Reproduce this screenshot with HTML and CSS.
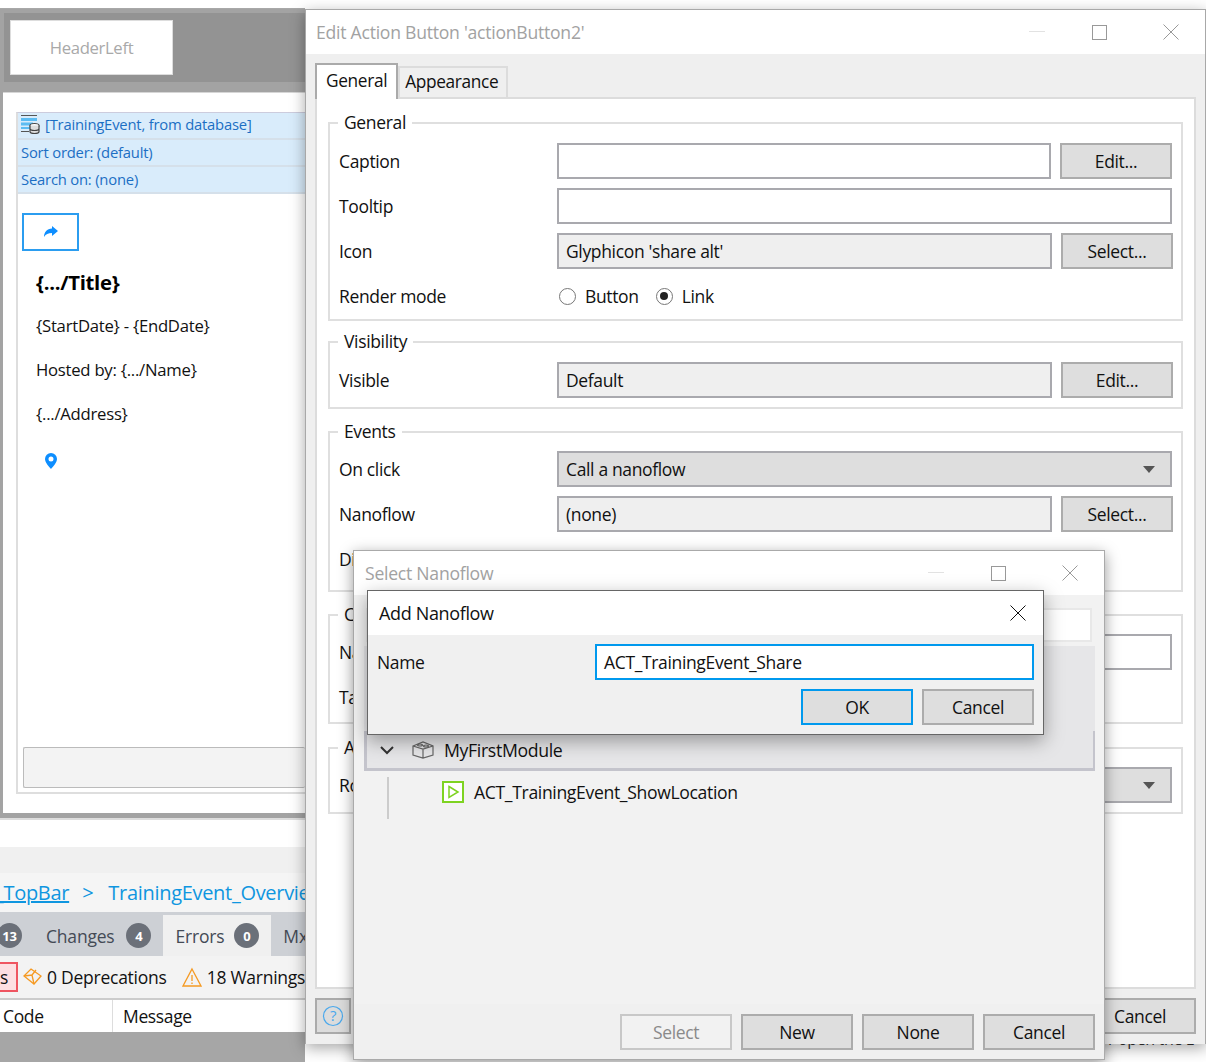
FILE: index.html
```html
<!DOCTYPE html>
<html lang="en">
<head>
<meta charset="utf-8">
<title>Edit Action Button</title>
<link rel="stylesheet" href="styles.css">
</head>
<body>
<div class="desk">
  <div class="app">
    <div class="topstrip"></div>
    <div class="canvas">
      <div class="headerband"><div class="headerleft">HeaderLeft</div></div>
      <div class="page">
        <div class="listview">
          <div class="bluerow first">
            <svg class="dbicon" width="22" height="20" viewBox="0 0 22 20"><path d="M2 1.500h16M2 17.500h8" stroke="#555" stroke-width="1.200" fill="none"/><path d="M2 4h16v3H2zM2 8.500h12v3H2zM2 13h9v2H2z" fill="#5cbcf2"/><ellipse cx="15.500" cy="11.500" rx="4.500" ry="2" fill="#fff" stroke="#444" stroke-width="1.200"/><path d="M11 11.500v6c0 1 2 2 4.500 2s4.500-1 4.500-2v-6M11 14.500c0 1 2 2 4.500 2s4.500-1 4.500-2" fill="#ddd" stroke="#444" stroke-width="1.200"/></svg>
            <span>[TrainingEvent, from database]</span>
          </div>
          <div class="bluerow">Sort order: (default)</div>
          <div class="bluerow">Search on: (none)</div>
          <div class="sharebtn">
            <svg width="16" height="14" viewBox="0 0 16 14"><path d="M9 1l6 5-6 5V8C5 8 3 9 1 12c0-5 3-8 8-8.500z" fill="#0d8eff"/></svg>
          </div>
          <div class="ttl">{.../Title}</div>
          <div class="line">{StartDate} - {EndDate}</div>
          <div class="line">Hosted by: {.../Name}</div>
          <div class="line">{.../Address}</div>
          <svg class="pin" width="12" height="16" viewBox="0 0 12 16"><path fill-rule="evenodd" d="M6 0a6 6 0 0 1 6 6c0 3.500-4 7.500-6 10C4 13.500 0 9.500 0 6a6 6 0 0 1 6-6zm0 3.500a2.500 2.500 0 1 0 0 5 2.500 2.500 0 0 0 0-5z" fill="#0d8eff"/></svg>
          <div class="spacer"></div>
          <div class="loadmore"></div>
        </div>
      </div>
    </div>
    <div class="gapwhite"></div>
    <div class="crumbpad"></div>
    <div class="crumbs"><a class="crumblink">_TopBar</a><span class="sep">&gt;</span><span class="crumbcur">TrainingEvent_Overview</span></div>
    <div class="tabstrip">
      <span class="tb tbfirst"><b class="badge">13</b></span>
      <span class="tb">Changes <b class="badge">4</b></span>
      <span class="tb tbactive">Errors <b class="badge">0</b></span>
      <span class="tb">Mx</span>
    </div>
    <div class="filters">
      <span class="redchip">s</span>
      <svg class="ficon" width="22" height="20" viewBox="0 0 22 20"><g fill="none" stroke="#f59a23" stroke-width="1.300"><path d="M9 2l10 7-7 8L2 9z"/><path d="M2 9l8-1 2 9M10 8l4-5"/></g></svg>
      <span class="ftxt">0 Deprecations</span>
      <svg class="ficon warn" width="20" height="20" viewBox="0 0 20 20"><path d="M10 2l9 17H1z" fill="none" stroke="#f59a23" stroke-width="1.300"/><path d="M10 8v6M10 15.500v1.500" stroke="#f59a23" stroke-width="1.300"/></svg>
      <span class="ftxt">18 Warnings</span>
    </div>
    <div class="tablehead"><span class="c1">Code</span><span class="c2">Message</span></div>
    <div class="appfoot"></div>
  </div>
  <div class="peek">r open the L</div>

  <section class="win editwin">
    <div class="wintitle">
      <span class="wtext">Edit Action Button 'actionButton2'</span>
      <span class="wmin"></span><span class="wmax"></span>
      <svg class="wclose" width="16" height="16" viewBox="0 0 16 16"><path d="M.5.500l15 15M15.500.500l-15 15" stroke="#999" fill="none"/></svg>
    </div>
    <div class="editbody">
      <div class="tabs"><span class="tab tabon">General</span><span class="tab">Appearance</span></div>
      <div class="tabpane">
        <fieldset class="grp g1">
          <legend>General</legend>
          <div class="row"><label>Caption</label><div class="inp"></div><div class="btn">Edit...</div></div>
          <div class="row"><label>Tooltip</label><div class="inp wide"></div></div>
          <div class="row r2"><label>Icon</label><div class="inp ro">Glyphicon 'share alt'</div><div class="btn">Select...</div></div>
          <div class="row"><label>Render mode</label>
            <div class="radios"><span class="radio"></span><span class="rtxt">Button</span><span class="radio on"></span><span class="rtxt">Link</span></div>
          </div>
        </fieldset>
        <fieldset class="grp g2">
          <legend>Visibility</legend>
          <div class="row r2"><label>Visible</label><div class="inp ro">Default</div><div class="btn">Edit...</div></div>
        </fieldset>
        <fieldset class="grp g3">
          <legend>Events</legend>
          <div class="row"><label>On click</label><div class="inp sel wide">Call a nanoflow<i class="caret"></i></div></div>
          <div class="row r2"><label>Nanoflow</label><div class="inp ro">(none)</div><div class="btn">Select...</div></div>
          <div class="row"><label>Disabled during action</label></div>
        </fieldset>
        <fieldset class="grp g4">
          <legend>Common</legend>
          <div class="row"><label>Name</label><div class="inp wide"></div></div>
          <div class="row"><label>Tab index</label></div>
        </fieldset>
        <fieldset class="grp g5">
          <legend>Accessibility</legend>
          <div class="row"><label>Role type</label><div class="inp sel wide"><i class="caret"></i></div></div>
        </fieldset>
      </div>
      <div class="editfoot">
        <div class="helpbtn"><svg width="22" height="22" viewBox="0 0 22 22"><circle cx="11" cy="11" r="9.500" fill="none" stroke="#4aa8ec" stroke-width="1.200"/><text x="11" y="16" text-anchor="middle" class="helpq">?</text></svg></div>
        <div class="btn footbtn">Cancel</div>
      </div>
    </div>
  </section>

  <section class="win selwin">
    <div class="wintitle seltitle">
      <span class="wtext">Select Nanoflow</span>
      <span class="wmin"></span><span class="wmax"></span>
      <svg class="wclose" width="16" height="16" viewBox="0 0 16 16"><path d="M.5.500l15 15M15.500.500l-15 15" stroke="#999" fill="none"/></svg>
    </div>
    <div class="selbody">
      <div class="searchbox"></div>
      <div class="tree">
        <div class="treeband"></div>
        <div class="treesel"></div>
        <div class="treerow modrow">
          <svg class="chev" width="14" height="9" viewBox="0 0 14 9"><path d="M1 1l6 6 6-6" fill="none" stroke="#333" stroke-width="2"/></svg>
          <svg class="lego" width="22" height="18" viewBox="0 0 22 18"><g fill="none" stroke="#666" stroke-width="1.200"><path d="M1 5l10-4 10 4v9l-10 3-10-3zM1 5l10 3 10-3M11 8v9"/><ellipse cx="8" cy="4" rx="2.500" ry="1"/><ellipse cx="14" cy="5" rx="2.500" ry="1"/></g></svg>
          <span>MyFirstModule</span>
        </div>
        <div class="treerow leaf">
          <svg width="22" height="22" viewBox="0 0 22 22"><rect x="1" y="1" width="20" height="20" fill="#fff" stroke="#7ed321" stroke-width="2"/><path d="M7 5.500l9 5.500-9 5.500z" fill="none" stroke="#7ed321" stroke-width="1.500"/></svg>
          <span>ACT_TrainingEvent_ShowLocation</span>
        </div>
      </div>
      <div class="selfoot">
        <div class="btn off">Select</div><div class="btn">New</div><div class="btn">None</div><div class="btn">Cancel</div>
      </div>
    </div>
  </section>

  <section class="addwin">
    <div class="addtitle"><span>Add Nanoflow</span>
      <svg width="16" height="16" viewBox="0 0 16 16"><path d="M.5.500l15 15M15.500.500l-15 15" stroke="#111" fill="none"/></svg>
    </div>
    <div class="addbody">
      <div class="addrow"><label>Name</label><div class="inp focus">ACT_TrainingEvent_Share</div></div>
      <div class="addbtns"><div class="btn primary">OK</div><div class="btn">Cancel</div></div>
    </div>
  </section>
</div>
</body>
</html>
```

FILE: styles.css
```css
* { box-sizing: border-box; }
html, body { margin: 0; padding: 0; }
body {
  font-family: "Open Sans", "Noto Sans", sans-serif;
  font-size: 16px;
  letter-spacing: -0.35px;
  color: #111;
  background: #fff;
}
.desk { position: relative; width: 1206px; height: 1062px; overflow: hidden; background: #fff; }

/* background application */
.app { width: 305px; height: 1062px; display: flex; flex-direction: column; overflow: hidden; white-space: nowrap; }
.topstrip { height: 9px; background: #fff; flex: none; border-bottom: 1px solid #a8a8a8; }
.canvas { height: 809px; flex: none; background: #a3a3a3; padding: 4px 0 0 4px; }
.headerband { height: 69px; background: #939393; padding: 7px 0 0 6px; }
.headerleft { width: 163px; height: 55px; background: #fff; border: 1px solid #ddd; color: #a9a9a9; display: flex; align-items: center; justify-content: center; font-size: 16.700px; }
.page { margin: 10px 0 0 -1px; height: 721px; background: #fff; border-top: 1px solid #d6d6d6; padding: 19px 0 0 13px; }
.listview { height: 682px; border-left: 2px solid #dedede; border-top: 1px solid #ccd; border-bottom: 2px solid #dedede; display: flex; flex-direction: column; }
.bluerow { height: 27px; flex: none; background: #d9ecfb; border-bottom: 2px solid #d5e0ea; color: #1c6fc4; font-size: 14.800px; padding: 0 0 2px 3px; display: flex; align-items: center; gap: 4px; letter-spacing: -0.2px; }
.bluerow.first { padding-bottom: 3px; }
.dbicon { margin-left: -2px; }
.sharebtn { width: 57px; height: 38px; flex: none; margin: 19px 0 0 4px; border: 2px solid #2b9df0; display: flex; align-items: center; justify-content: center; }
.ttl { margin: 17px 0 0 18px; font-weight: 700; font-size: 20.300px; color: #000; height: 28px; letter-spacing: -0.3px; }
.line { margin: 17px 0 0 18px; height: 27px; font-size: 16.700px; color: #111; letter-spacing: -0.25px; }
.ttl + .line { margin-top: 18px; }
.pin { margin: 24px 0 0 27px; flex: none; }
.spacer { flex: 1; }
.loadmore { height: 41px; flex: none; margin: 0 0 4px 5px; background: #f3f3f3; border: 1px solid #bbb; border-right: 0; border-radius: 2px; }
.gapwhite { height: 29px; flex: none; background: #fff; border-top: 2px solid #ddd; }
.crumbpad { height: 26px; flex: none; background: #f0f0f0; }
.crumbs { height: 39px; flex: none; background: #f5f5f5; color: #0f96e0; font-size: 20px; display: flex; align-items: center; margin-left: -2px; width: 320px; letter-spacing: -0.3px; }
.crumblink { text-decoration: underline; margin-left: -3px; margin-right: 13px; }
.sep { margin-right: 15px; }
.tabstrip { height: 44px; flex: none; background: #cdd0d5; display: flex; align-items: flex-end; color: #444a55; font-size: 17.500px; }
.tb { height: 41px; display: flex; align-items: center; gap: 12px; padding: 0 12px; letter-spacing: -0.2px; flex: none; }
.tbfirst { margin-left: -3px; padding-left: 0; padding-right: 0; width: 39px; justify-content: flex-start; }
.tbfirst + .tb { padding-left: 10px; }
.tbactive { background: #f0f0f0; gap: 10px; }
.badge { width: 25px; height: 25px; border-radius: 50%; background: #6b7079; color: #fff; font-size: 13px; font-weight: 700; display: flex; align-items: center; justify-content: center; flex: none; }
.filters { height: 44px; flex: none; background: #f3f3f3; display: flex; align-items: center; font-size: 17.500px; border-bottom: 2px solid #ccc; }
.redchip { width: 18px; height: 30px; flex: none; background: #fddfe2; border: 2px solid #ef5561; border-left: 0; display: flex; align-items: center; padding-left: 0; margin-right: 4px; }
.ficon { flex: none; }
.ftxt { margin-left: 3px; letter-spacing: -0.25px; flex: none; }
.warn { margin-left: 15px; margin-right: 2px; }
.tablehead { height: 32px; flex: none; background: #fff; display: flex; font-size: 17.500px; align-items: center; }
.c1 { width: 113px; padding-left: 3px; border-right: 1px solid #ddd; height: 100%; display: flex; align-items: center; }
.c2 { padding-left: 10px; }
.appfoot { flex: 1; background: #a6a6a6; }
.peek { position: absolute; left: 1108px; top: 1028px; font-size: 16px; color: #333; }

/* windows */
.win { position: absolute; display: flex; flex-direction: column; white-space: nowrap; }
.editwin { left: 305px; top: 9px; width: 901px; height: 1035px; background: #efefef; border: 1px solid #a8a8a8; border-bottom: 0; box-shadow: 0 4px 14px rgba(0,0,0,.35); font-size: 18px; }
.selwin { left: 353px; top: 550px; width: 752px; height: 510px; background: #f2f2f2; border: 1px solid #aaa; box-shadow: 0 4px 14px rgba(0,0,0,.4); font-size: 18px; }
.wintitle { height: 44px; flex: none; background: #fff; display: flex; align-items: center; padding-left: 10px; position: relative; }
.seltitle { padding-left: 11px; }
.wtext { color: #a2a2a2; font-size: 17.600px; letter-spacing: -0.25px; }
.wmin { position: absolute; right: 160px; top: 21px; width: 16px; height: 1px; background: #e2e2e2; }
.wmax { position: absolute; right: 98px; top: 15px; width: 15px; height: 15px; border: 1px solid #999; }
.wclose { position: absolute; right: 26px; top: 14px; }
.editbody { flex: 1; display: flex; flex-direction: column; padding: 9px 9px 0 9px; }
.tabs { display: flex; height: 34px; flex: none; align-items: flex-end; }
.tab { height: 31px; padding: 0 8px 2px 5px; border: 2px solid #dcdcdc; border-bottom: 0; display: flex; align-items: center; font-size: 17.300px; }
.tabon { background: #fff; border-color: #aaa; padding: 0 9px 4px; position: relative; margin-bottom: -2px; height: 36px; z-index: 1; }
.tabpane { height: 892px; flex: none; background: #fff; border: 2px solid #dcdcdc; padding: 16px 11px 0 11px; }
.grp { margin: 0 0 12px; padding: 8px 9px 0 9px; border: 2px solid #dfdfdf; min-width: 0; }
.grp legend { padding: 0 6px; margin-left: -1px; font-size: 17.500px; line-height: 22px; position: relative; top: -1px; }
.g1 { height: 209px; margin-top: -3px; margin-bottom: 10px; padding-top: 9px; }
.g2 { height: 78px; padding-top: 9px; }
.g3 { height: 171px; }
.g4 { height: 120px; margin-bottom: 13px; }
.g5 { height: 77px; }
.row { display: flex; align-items: center; height: 36px; margin-bottom: 9px; gap: 9px; }
.r2 { margin-right: -1px; }
.row label { width: 209px; flex: none; font-size: 17.500px; }
.inp { height: 36px; flex: 1; border: 2px solid #a9a9ae; background: #fff; padding: 0 7px; display: flex; align-items: center; min-width: 0; font-size: 17.500px; }
.inp.ro { background: #efefef; }
.inp.sel { background: #dedede; padding-right: 15px; }
.caret { width: 0; height: 0; margin-left: auto; border-left: 6px solid transparent; border-right: 6px solid transparent; border-top: 7px solid #555; }
.btn { width: 112px; height: 36px; flex: none; background: #dedede; border: 2px solid #acacac; display: flex; align-items: center; justify-content: center; font-size: 17.500px; }
.radios { display: flex; align-items: center; margin-left: 2px; }
.radio { width: 17px; height: 17px; border: 1.500px solid #777; border-radius: 50%; background: #fff; margin-right: 9px; position: relative; }
.radio.on::after { content: ""; position: absolute; left: 3px; top: 3px; width: 8px; height: 8px; background: #222; border-radius: 50%; }
.rtxt { margin-right: 17px; font-size: 17.500px; }
.editfoot { flex: 1; display: flex; justify-content: space-between; padding: 9px 0 0 0; }
.helpbtn { width: 36px; height: 36px; background: #dcdcdc; border: 2px solid #aaa; display: flex; align-items: center; justify-content: center; }
.helpq { font-size: 15px; fill: #4aa8ec; }

/* select nanoflow */
.selbody { flex: 1; display: flex; flex-direction: column; padding: 13px 9px 0 12px; }
.searchbox { height: 34px; flex: none; background: #fff; border: 2px solid #e8e8e8; margin-right: 3px; }
.tree { height: 358px; flex: none; margin-top: 4px; position: relative; background: #f2f2f2; }
.treeband { height: 85px; background: #e6e6e8; margin-left: -2px; }
.treesel { height: 40px; background: #e6e6e8; border: solid #c4c4cc; border-width: 0 2px 3px 3px; margin-left: -2px; }
.treerow { display: flex; align-items: center; font-size: 17.700px; }
.modrow { position: absolute; left: 14px; top: 93px; height: 22px; gap: 0; }
.chev { margin-right: 18px; }
.lego { margin-right: 10px; }
.leaf { position: absolute; left: 76px; top: 134px; gap: 10px; font-size: 17.600px; }
.leaf::before { content: ""; position: absolute; left: -55px; top: -3px; width: 2px; height: 42px; background: #ccc; }
.selfoot { display: flex; justify-content: flex-end; gap: 9px; padding-top: 10px; margin: 0 -9px 0 -12px; padding-right: 9px; flex: 1; background: #f0f0f0; }
.btn.off { background: #f2f2f2; color: #8a8a8a; border-color: #c8c8c8; }

/* add nanoflow */
.addwin { position: absolute; left: 367px; top: 590px; width: 677px; height: 145px; background: #f0f0f0; border: 1px solid #666; box-shadow: 0 6px 18px rgba(0,0,0,.35); white-space: nowrap; display: flex; flex-direction: column; }
.addtitle { height: 44px; flex: none; background: #fff; display: flex; justify-content: space-between; align-items: center; padding: 0 17px 0 11px; font-size: 18px; }
.addbody { flex: 1; display: flex; flex-direction: column; padding: 9px 9px 0 9px; }
.addrow { display: flex; align-items: center; }
.addrow label { width: 218px; flex: none; font-size: 17.500px; }
.inp.focus { border-color: #0099ee; }
.addbtns { display: flex; justify-content: flex-end; gap: 9px; margin-top: 9px; }
.btn.primary { border-color: #0099ee; }
```
